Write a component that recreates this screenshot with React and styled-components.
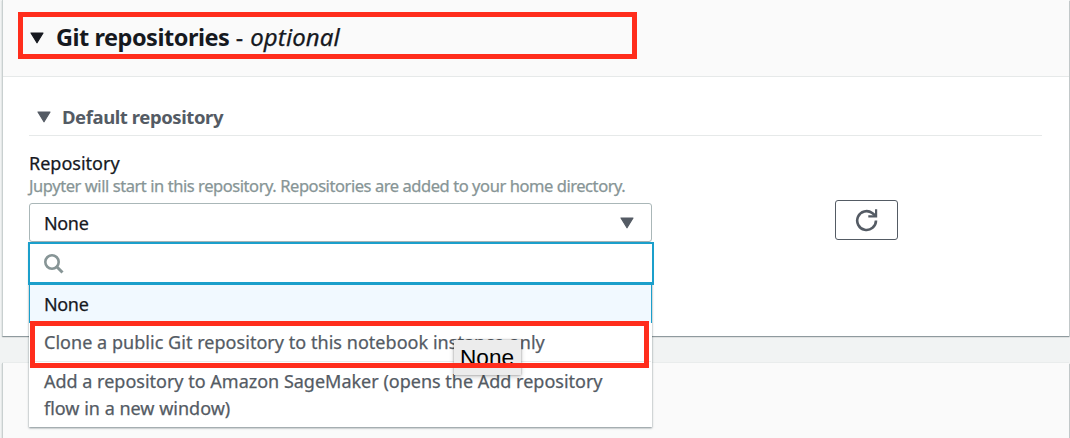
import React from "react";
import styled, { createGlobalStyle } from "styled-components";

const GlobalStyle = createGlobalStyle`
  * { box-sizing: border-box; }
  html, body { margin: 0; height: 438px; overflow: hidden; }
  body { background: #f1f3f3; font-family: "Noto Sans", "Open Sans", sans-serif; color: #16191f; }
`;

const Page = styled.main`
  height: 438px;
  padding: 0 1px 0 2px;
  overflow: hidden;
  display: flex;
  flex-direction: column;
  gap: 27px;
`;

const Card = styled.section`
  position: relative;
  z-index: ${(p) => (p.$raised ? 1 : 0)};
  flex: none;
  height: ${(p) => p.$height}px;
  background: ${(p) => (p.$muted ? "#fafafa" : "#fff")};
  border-left: 1px solid #c9d0d0;
  box-shadow: 0 1px 1px rgba(0, 28, 36, 0.3), 1px 1px 1px rgba(0, 28, 36, 0.15), 0 -1px 0 #e9ecec;
`;

const CardHeader = styled.header`
  height: 77px;
  padding: 12px 0 0 15px;
  background: #fafafa;
  border-bottom: 1px solid #e6e9e9;
`;

const Highlight = styled.div`
  width: 619px;
  height: 47px;
  border: 5px solid #ff2d1c;
`;

const HeadingFrame = styled(Highlight)`
  display: flex;
  align-items: center;
  padding: 2px 0 0 7px;

  svg { margin-top: 3px; }
`;

const Text = styled.span`
  font-size: ${(p) => p.$size}px;
  font-weight: ${(p) => p.$weight || 400};
  letter-spacing: ${(p) => p.$track || 0}px;
  color: ${(p) => p.$color || "#16191f"};
  font-style: ${(p) => (p.$italic ? "italic" : "normal")};
  -webkit-text-stroke: ${(p) => (p.$weight ? 0 : 0.25)}px currentColor;
  white-space: pre;
`;

const Title = styled.h2`
  margin: 0 0 0 12px;
  line-height: 30px;
  font-weight: 400;
  display: flex;
`;

const Body = styled.div`
  padding: 28px 27px 0 26px;
`;

const SubHeader = styled.div`
  height: 31px;
  padding-left: 8px;
  display: flex;
  align-items: flex-start;
  line-height: 23px;
  border-bottom: 1px solid #e6e9e9;

  svg { margin: 6px 11px 0 0; }
`;

const Field = styled.div`
  padding-top: 16px;
  display: flex;
  flex-direction: column;
`;

const Line = styled.div`
  height: ${(p) => p.$height}px;
  line-height: ${(p) => p.$height}px;
`;

const ControlRow = styled.div`
  display: flex;
  align-items: flex-start;
  gap: 183px;
  margin-top: 3px;
`;

const SelectWrap = styled.div`
  position: relative;
  width: 623px;
  padding-top: 3px;
`;

const Select = styled.div`
  height: 39px;
  padding: 0 17px 0 14px;
  display: flex;
  align-items: center;
  justify-content: space-between;
  border: 1px solid #aab7b8;
  border-radius: 3px;
`;

const RefreshButton = styled.button`
  width: 63px;
  height: 40px;
  padding: 0;
  display: flex;
  align-items: center;
  justify-content: center;
  background: #fff;
  border: 1px solid #545b64;
  border-radius: 3px;
`;

const Menu = styled.div`
  position: absolute;
  z-index: 2;
  top: 42px;
  left: 0;
  width: 623px;
  height: 185px;
  background: #fff;
  box-shadow: 0 1px 2px rgba(0, 28, 36, 0.5);
`;

const SearchBox = styled.div`
  height: 43px;
  margin: 0 -2px 0 -1px;
  padding: 10px 0 0 14px;
  background: #fff;
  border: 2px solid #1b9fcb;
  border-bottom-width: 3px;
`;

const Option = styled.div`
  height: ${(p) => p.$height}px;
  padding: 6px 14px 0;
  line-height: 26px;
  border: solid ${(p) => (p.$active ? "#1b9fcb" : "transparent")};
  border-width: 0 1px;
  background: ${(p) => (p.$active ? "#f1f9ff" : "#fff")};
  box-shadow: ${(p) => (p.$divider ? "inset 0 -1px #e8ebeb" : "none")};
`;

const OptionHighlight = styled(Highlight)`
  position: absolute;
  z-index: 2;
  left: 1px;
  top: 79px;
`;

const Tooltip = styled.div`
  position: absolute;
  z-index: 1;
  left: 425px;
  top: 98px;
  width: 67px;
  height: 35px;
  padding-left: 6px;
  background: #ececec;
  box-shadow: 0 0 2px rgba(0, 0, 0, 0.35), 0 2px 5px rgba(0, 0, 0, 0.2);
  font: 22.6px/36px "Liberation Sans", sans-serif;
  color: #000;
`;

const CaretSvg = styled.svg`
  display: block;
  flex: none;
`;

const Caret = ({ color = "#545b64" }) => (
  <CaretSvg width="14" height="12" viewBox="0 0 14 12">
    <path d="M1 1h12L7 10.8z" fill={color} stroke={color} strokeWidth="1.2" strokeLinejoin="round" />
  </CaretSvg>
);

const SearchIcon = () => (
  <svg width="20" height="20" viewBox="0 0 20 20" fill="none" stroke="#879596" strokeWidth="2.6">
    <circle cx="8" cy="8" r="6.7" />
    <path d="M12.5 12.5l6 6" strokeWidth="3" />
  </svg>
);

const RefreshIcon = () => (
  <svg width="24" height="24" viewBox="0 0 24 24" fill="none" stroke="#545b64" strokeWidth="2.6">
    <path d="M21 12.5A9.4 9.4 0 1 1 17.2 5L20.3 7.6" />
    <path d="M21.1 1.2v7.1h-7.8" strokeWidth="2.2" />
  </svg>
);

const grey = "#545b64";

export default function App() {
  return (
    <>
      <GlobalStyle />
      <Page>
        <Card $height={336} $raised>
          <CardHeader>
            <HeadingFrame>
              <Caret color="#16191f" />
              <Title>
                <Text $size={23.5} $weight={700} $track={-0.48}>Git repositories</Text>
                <Text $size={23} $track={0.5}> - </Text>
                <Text $size={24} $track={0.1} $italic>optional</Text>
              </Title>
            </HeadingFrame>
          </CardHeader>
          <Body>
            <SubHeader>
              <Caret />
              <Text $size={18.5} $weight={700} $track={-0.42} $color={grey}>Default repository</Text>
            </SubHeader>
            <Field>
              <Line $height={23}><Text $size={18}>Repository</Text></Line>
              <Line $height={22}>
                <Text $size={16.5} $track={-0.435} $color="#879596">Jupyter will start in this repository. Repositories are added to your home directory.</Text>
              </Line>
              <ControlRow>
                <SelectWrap>
                  <Select>
                    <Text $size={18} $track={-0.35}>None</Text>
                    <Caret />
                  </Select>
                  <Menu>
                    <SearchBox><SearchIcon /></SearchBox>
                    <Option $active $height={38}><Text $size={18} $track={-0.35}>None</Text></Option>
                    <Option $divider $height={39}><Text $size={18} $track={0.04} $color={grey}>Clone a public Git repository to this notebook instance only</Text></Option>
                    <Option $height={65}>
                      <Text $size={18} $color={grey}>{"Add a repository to Amazon SageMaker (opens the Add repository\nflow in a new window)"}</Text>
                    </Option>
                    <Tooltip>None</Tooltip>
                    <OptionHighlight />
                  </Menu>
                </SelectWrap>
                <RefreshButton aria-label="Refresh"><RefreshIcon /></RefreshButton>
              </ControlRow>
            </Field>
          </Body>
        </Card>
        <Card $height={90} $muted />
      </Page>
    </>
  );
}
